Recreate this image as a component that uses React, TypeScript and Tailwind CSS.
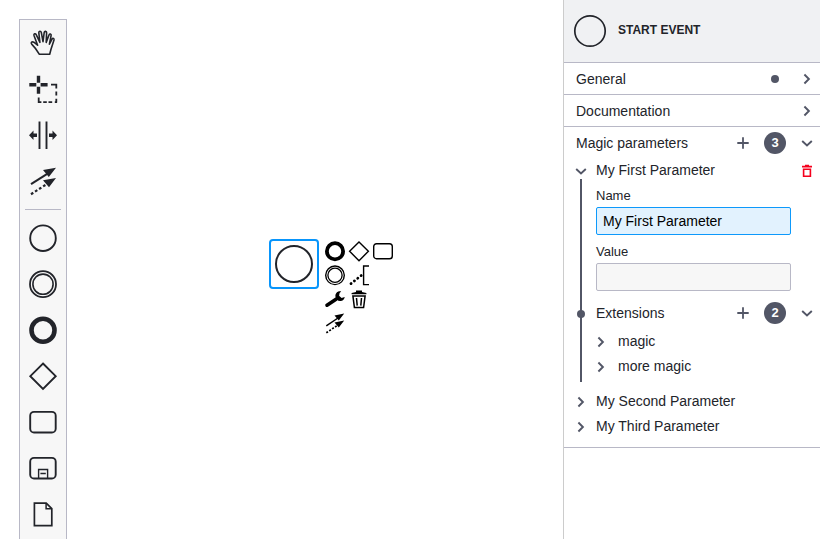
import type { ReactNode } from "react";

function Tool({ children }: { children: ReactNode }) {
  return (
    <button className="block h-[46px] w-[46px] shrink-0 text-[#22242a]">
      <svg width="46" height="46" viewBox="0 0 46 46" fill="none" stroke="currentColor" strokeWidth="1.9">
        {children}
      </svg>
    </button>
  );
}

function Pad({ children }: { children: ReactNode }) {
  return (
    <button className="block h-[22px] w-[22px] text-black">
      <svg width="22" height="22" viewBox="0 0 22 22" fill="none" stroke="currentColor" strokeWidth="1.4">
        {children}
      </svg>
    </button>
  );
}

function Chevron({ down = false }: { down?: boolean }) {
  return (
    <svg className="block shrink-0 text-[#525666]" width="16" height="16" viewBox="0 0 16 16" fill="none" stroke="currentColor" strokeWidth="1.9">
      {down ? <path d="M3.2 6 8 10.4 12.8 6" /> : <path d="M5.4 3.5 9.9 8 5.4 12.5" />}
    </svg>
  );
}

function Plus() {
  return (
    <svg className="block shrink-0 text-[#525666]" width="16" height="16" viewBox="0 0 16 16" stroke="currentColor" strokeWidth="1.8">
      <path d="M8 2.3v11.4M2.3 8h11.4" />
    </svg>
  );
}

function ListTools({ count }: { count: number }) {
  return (
    <div className="flex items-center">
      <Plus />
      <span className="ml-[13px] mr-[13px] flex h-[22px] w-[22px] items-center justify-center rounded-full bg-[#525666] text-[13px] font-bold leading-[22px] text-white">
        {count}
      </span>
      <Chevron down />
    </div>
  );
}

function Palette() {
  return (
    <div className="mt-[19px] ml-[19px] flex h-[600px] w-[48px] shrink-0 flex-col border border-[#b8b8c6] bg-[#f7f7f7]">
      <Tool>
        <path
          strokeWidth="1.6"
          strokeLinejoin="round"
          d="M19.4 34.3C17.2 30.5 14.8 27.2 11.7 24.1 10.4 22.6 12.1 21.2 13.8 22.2L17.6 25.2 14 15.5C13.5 13.8 15.4 13.1 16.2 14.7L19.9 22.3 18.8 12.6C18.7 10.9 20.9 10.7 21.3 12.4L23 21.6 24.2 12.5C24.5 10.8 26.7 11 26.6 12.8L26.2 22.4 29 15C29.7 13.4 31.5 14 31.1 15.7L29.4 24.2 32 19.1C32.8 17.7 34.4 18.4 34 20L31 29.3 29.7 34.3Z"
        />
      </Tool>
      <Tool>
        <path strokeWidth="3.4" d="M9.3 18.8h7M20.6 18.8h7M18.5 9.7v7M18.5 20.7v7" />
        <path strokeWidth="1.8" d="M31 18.7h5.3v3.8M36.3 25.5v4M36.3 32.8v3.4M34.8 36.1h2.3M28.5 36.1h3.7M23.2 36.1h3.6M18.7 31.5v4.6h2.7" />
      </Tool>
      <Tool>
        <path strokeWidth="1.9" d="M19.5 9.5v27.5M26.5 9.5v27.5" />
        <path stroke="none" fill="currentColor" d="M9 23.3 13.5 18.5V21.5H17V25.1H13.5V28.1ZM37 23.3 32.5 18.5V21.5H29V25.1H32.5V28.1Z" />
      </Tool>
      <Tool>
        <path d="M11 26.2 28 15.3" strokeWidth="2" />
        <path d="M11 36.2 28 25.3" strokeWidth="2.2" strokeDasharray="2.7 2.1" />
        <path fill="currentColor" stroke="none" d="M36 9.8 23 12.1 28.8 19ZM36 19.9 23 22.3 29 29.3Z" />
      </Tool>
      <div className="mx-[5px] my-[5px] h-px shrink-0 bg-[#b8b8c6]" />
      <Tool><circle cx="23" cy="23.2" r="12.8" /></Tool>
      <Tool>
        <circle cx="23" cy="23.2" r="13" strokeWidth="1.8" />
        <circle cx="23" cy="23.2" r="10.1" strokeWidth="1.6" />
      </Tool>
      <Tool><circle cx="23" cy="23.2" r="11.5" strokeWidth="4.6" /></Tool>
      <Tool><path d="M23 10.5 35.7 23.2 23 35.9 10.3 23.2Z" /></Tool>
      <Tool><rect x="10.2" y="12.9" width="25.5" height="20.6" rx="3.8" /></Tool>
      <Tool>
        <rect x="10.2" y="12.9" width="25.5" height="20.6" rx="3.8" />
        <path strokeWidth="1.4" d="M18.6 33.5V24.5H27.6V33.5M20.4 28.5h5.4" />
      </Tool>
      <Tool>
        <path strokeWidth="1.7" d="M14.4 12.1H26.2L31.8 17.7V34.6H14.4Z" />
        <path strokeWidth="1.5" d="M26.1 12v5.8h5.7" />
      </Tool>
    </div>
  );
}

function ContextPad() {
  return (
    <div className="mt-[240px] ml-[5px] grid grid-cols-[22px_22px_22px] content-start gap-[2px]">
      <Pad><circle cx="11" cy="11.3" r="8.1" strokeWidth="3.8" /></Pad>
      <Pad><path strokeWidth="1.4" d="M11 1.9 20.4 11.3 11 20.7 1.6 11.3Z" /></Pad>
      <Pad><rect x="1.7" y="3.7" width="18.6" height="15" rx="2.8" strokeWidth="1.4" /></Pad>
      <Pad>
        <circle cx="11" cy="11.3" r="9.3" strokeWidth="1.4" />
        <circle cx="11" cy="11.3" r="7.1" strokeWidth="1.3" />
      </Pad>
      <Pad>
        <path strokeWidth="1.4" d="M21 2H15.6V20.6H21" />
        <path strokeWidth="2.8" strokeLinecap="round" strokeDasharray="0.1 4.2" d="M3 19.6 14 10.9" />
      </Pad>
      <span />
      <Pad>
        <path strokeWidth="3.6" strokeLinecap="round" d="M3 17.2 12 11.2" />
        <path fill="currentColor" stroke="none" d="M17.2 3.4C13.8 2.5 11.3 5 11.4 8.3 11.5 11.7 14.4 13.6 17 13 19.3 12.5 20.6 10.8 20.7 9L17.6 10 15.1 7.8 15.6 5.1Z" />
      </Pad>
      <Pad>
        <path fill="currentColor" stroke="none" d="M3.6 6.3V5.1L8 3.9V2.5H14V3.9L18.4 5.1V6.3Z" />
        <path strokeWidth="1.5" d="M4.9 7.9H17.1L15.6 19.6H6.4ZM8.5 10 9.2 17.6M13.5 10 12.8 17.6" />
      </Pad>
      <span />
      <Pad>
        <path strokeWidth="1.5" d="M2.3 13.8 14 6" />
        <path strokeWidth="1.7" strokeDasharray="2 1.5" d="M2.3 20.8 14 13" />
        <path fill="currentColor" stroke="none" d="M20.2 1.4 10.5 3.4 14.8 8.6ZM20.2 8.4 10.5 10.4 14.8 15.6Z" />
      </Pad>
    </div>
  );
}

function Section({ title, children }: { title: string; children: ReactNode }) {
  return (
    <div className="flex h-8 items-center justify-between border-b border-[#b8b8c6] pr-[5px] pl-3">
      <span>{title}</span>
      <div className="flex items-center">{children}</div>
    </div>
  );
}

function CollapsedItem({ title, gap }: { title: string; gap: string }) {
  return (
    <div className={`flex h-[25px] items-center ${gap}`}>
      <Chevron />
      <span className="pb-[2px]">{title}</span>
    </div>
  );
}

function PropertiesPanel() {
  return (
    <aside className="flex h-[539px] w-[257px] shrink-0 flex-col border-l border-[#cccccc] bg-white text-[14px] leading-[20px] text-[#22242a]">
      <header className="flex h-[63px] shrink-0 items-center gap-[11px] border-b border-[#b8b8c6] bg-[#f0f1f3] pl-[9px]">
        <svg width="34" height="34" viewBox="0 0 34 34" fill="none" stroke="#22242a" strokeWidth="1.7">
          <circle cx="17" cy="17" r="15.2" />
        </svg>
        <span className="mb-[3px] text-[12px] font-bold">START EVENT</span>
      </header>
      <Section title="General">
        <span className="mr-5 h-2 w-2 rounded-full bg-[#525666]" />
        <Chevron />
      </Section>
      <Section title="Documentation"><Chevron /></Section>
      <section className="h-[321px] border-b border-[#b8b8c6]">
        <div className="flex h-8 items-center justify-between pr-[5px] pl-3">
          <span>Magic parameters</span>
          <ListTools count={3} />
        </div>
        <div className="flex h-5 items-center pt-[3px] pr-[5px] pl-[9px]">
          <Chevron down />
          <span className="ml-[7px] flex-1 pb-[2px]">My First Parameter</span>
          <svg width="16" height="16" viewBox="0 0 16 16" fill="none" stroke="#f5001d" strokeWidth="1.6">
            <path d="M3 3.6h10M6 2.5h4" />
            <path d="M4.6 6.2h6.8v7H4.6Z" />
          </svg>
        </div>
        <div className="flex h-[203px]">
          <div className="relative ml-4 mr-[14px] w-[2px] shrink-0 bg-[#525666]">
            <span className="absolute top-[131px] -left-[3px] h-2 w-2 rounded-full bg-[#525666]" />
          </div>
          <div className="flex-1">
            <label className="flex h-[28px] items-end pb-[2px] text-[13px] leading-[18px]">Name</label>
            <input
              className="block h-[28px] w-[195px] rounded-[2px] border border-[#0d99fb] bg-[#e2f2fe] px-[6px] text-[14px] text-black outline-none"
              defaultValue="My First Parameter"
            />
            <label className="flex h-[28px] items-end pb-[2px] text-[13px] leading-[18px]">Value</label>
            <input className="block h-[28px] w-[195px] rounded-[2px] border border-[#b8b8c6] bg-[#f7f7f7] px-[6px] outline-none" />
            <div className="mt-[6px] flex h-[32px] items-center justify-between pr-[5px]">
              <span>Extensions</span>
              <ListTools count={2} />
            </div>
            <div className="-ml-[3px]">
              <CollapsedItem title="magic" gap="gap-[9px]" />
              <CollapsedItem title="more magic" gap="gap-[9px]" />
            </div>
          </div>
        </div>
        <div className="pt-[7px] pl-[9px]">
          <CollapsedItem title="My Second Parameter" gap="gap-[7px]" />
          <CollapsedItem title="My Third Parameter" gap="gap-[7px]" />
        </div>
      </section>
    </aside>
  );
}

export default function App() {
  return (
    <div className="flex h-[539px] w-[820px] overflow-hidden bg-white font-['Liberation_Sans',Arial,sans-serif]">
      <Palette />
      <main className="ml-[202px] flex flex-1">
        <div className="mt-[239px] h-[50px] w-[50px] rounded-[4px] border-2 border-[#0895fb]">
          <svg width="46" height="46" viewBox="0 0 46 46" fill="none" stroke="#22242a" strokeWidth="2">
            <circle cx="23" cy="23" r="18" />
          </svg>
        </div>
        <ContextPad />
      </main>
      <PropertiesPanel />
    </div>
  );
}
